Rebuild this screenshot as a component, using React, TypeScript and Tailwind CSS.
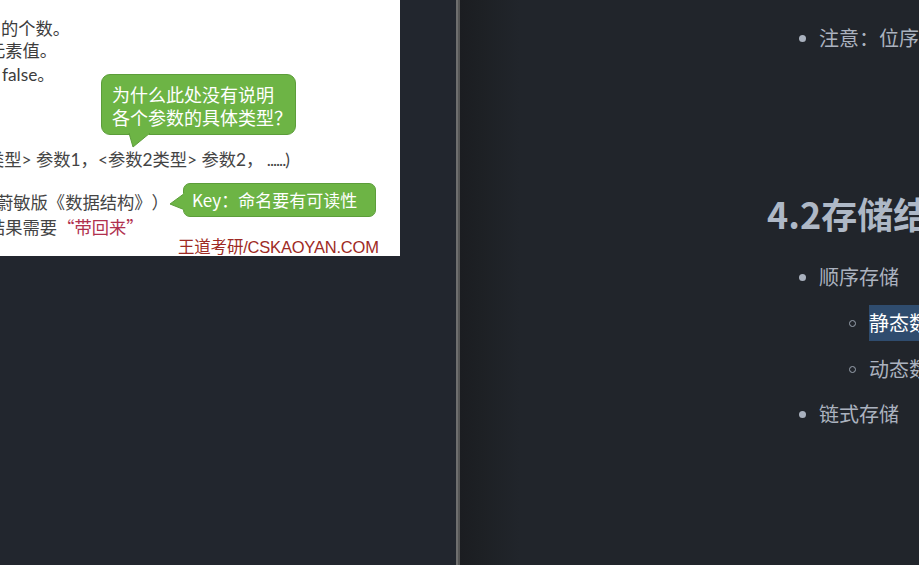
import React from "react";

const cjk = { fontFamily: '"Noto Sans CJK SC", "Noto Sans", sans-serif' };
const slideFont = { fontFamily: 'Lato, "Noto Sans CJK SC", sans-serif' };

function Bullet({ hollow }: { hollow?: boolean }) {
  return hollow ? (
    <span className="inline-block shrink-0 w-[7px] h-[7px] rounded-full border-[1.5px] border-[#9aa3b0]" />
  ) : (
    <span className="inline-block shrink-0 w-[7px] h-[7px] rounded-full bg-[#a9b1be]" />
  );
}

export default function App() {
  return (
    <div className="w-[919px] h-[565px] flex overflow-hidden bg-[#22262e] [text-spacing-trim:space-all]" style={cjk}>
      {/* left panel */}
      <div className="w-[456px] h-full bg-[#22262e] shrink-0">
        <div
          className="relative w-[400px] h-[256px] bg-white overflow-hidden text-[#3c3c3c] text-[17.3px] leading-[22px] whitespace-nowrap"
          style={slideFont}
        >
          <div className="absolute left-[1px] top-[18px]">的个数。</div>
          <div className="absolute left-[-12px] top-[40px]">元素值。</div>
          <div className="absolute left-[2px] top-[64px]">false。</div>
          <div className="absolute left-[-13px] top-[149px] text-[#444]">
            类型&gt; 参数1，&lt;参数2类型&gt; 参数2，
            <span className="tracking-[-1px]"> ......</span>)
          </div>
          <div className="absolute left-[-4px] top-[191px] text-[#444]" style={cjk}>蔚敏版《数据结构》）</div>
          <div className="absolute left-[-12px] top-[216px] text-[#444]" style={cjk}>
            结果需要<span className="text-[#b0304e]">“带回来”</span>
          </div>
          <div
            className="absolute left-[178px] top-[236px] text-[16.5px] text-[#9e2a24] tracking-[-0.2px]"
            style={{ fontFamily: '"Liberation Sans", "Noto Sans CJK SC", sans-serif' }}
          >
            王道考研/CSKAOYAN.COM
          </div>

          {/* bubble 1 */}
          <div
            className="absolute left-[101px] top-[74px] w-[195px] h-[61px] rounded-[9px] bg-[#6db445] border border-[#5c9d3a] text-white text-[18px] leading-[23px] pl-[10px] pt-[8px]"
            style={cjk}
          >
            <div>为什么此处没有说明</div>
            <div>各个参数的具体类型？</div>
          </div>
          <svg className="absolute left-[128px] top-[133px]" width="24" height="16" viewBox="0 0 24 16">
            <path d="M1 0 L5 14 L22 0 Z" fill="#6db445" stroke="#5c9d3a" strokeWidth="1" />
            <rect x="2" y="0" width="19" height="2" fill="#6db445" />
          </svg>

          {/* bubble 2 */}
          <div
            className="absolute left-[183px] top-[183px] w-[193px] h-[34px] rounded-[7px] bg-[#6db445] border border-[#5c9d3a] text-white text-[17px] leading-[32px] pl-[8px]"
            style={cjk}
          >
            Key：命名要有可读性
          </div>
          <svg className="absolute left-[169px] top-[192px]" width="16" height="20" viewBox="0 0 16 20">
            <path d="M16 1 L1 12 L16 18 Z" fill="#6db445" stroke="#5c9d3a" strokeWidth="1" />
            <rect x="14" y="1" width="2" height="17" fill="#6db445" />
          </svg>
        </div>
      </div>

      {/* divider */}
      <div className="w-[2px] h-full bg-[#6e6e6e] shrink-0" />
      <div className="w-[2px] h-full bg-[#555555] shrink-0" />

      {/* right panel */}
      <div className="flex-1 h-full overflow-hidden bg-[linear-gradient(to_right,#1b1d21_0px,#1d2024_20px,#21252b_60px)] text-[#abb2bf] whitespace-nowrap">
        <div className="flex flex-col pl-[339px]">
          <div className="flex items-center h-[30px] mt-[23px] text-[20px]">
            <Bullet />
            <span className="ml-[13px]">注意：位序从1开始</span>
          </div>
          <div className="h-[48px] mt-[136px] -ml-[32px] text-[36px] leading-[48px] font-bold text-[#aeb8c6]">
            4.2存储结构
          </div>
          <div className="flex items-center h-[30px] mt-[25px] text-[20px]">
            <Bullet />
            <span className="ml-[13px]">顺序存储</span>
          </div>
          <div className="flex items-center h-[36px] mt-[13px] ml-[50px] text-[20px]">
            <Bullet hollow />
            <span className="ml-[13px] bg-[#2f4c6e] text-white h-[36px] leading-[36px]">静态数组</span>
          </div>
          <div className="flex items-center h-[30px] mt-[13px] ml-[50px] text-[20px]">
            <Bullet hollow />
            <span className="ml-[13px]">动态数组</span>
          </div>
          <div className="flex items-center h-[30px] mt-[15px] text-[20px]">
            <Bullet />
            <span className="ml-[13px]">链式存储</span>
          </div>
        </div>
      </div>
    </div>
  );
}
